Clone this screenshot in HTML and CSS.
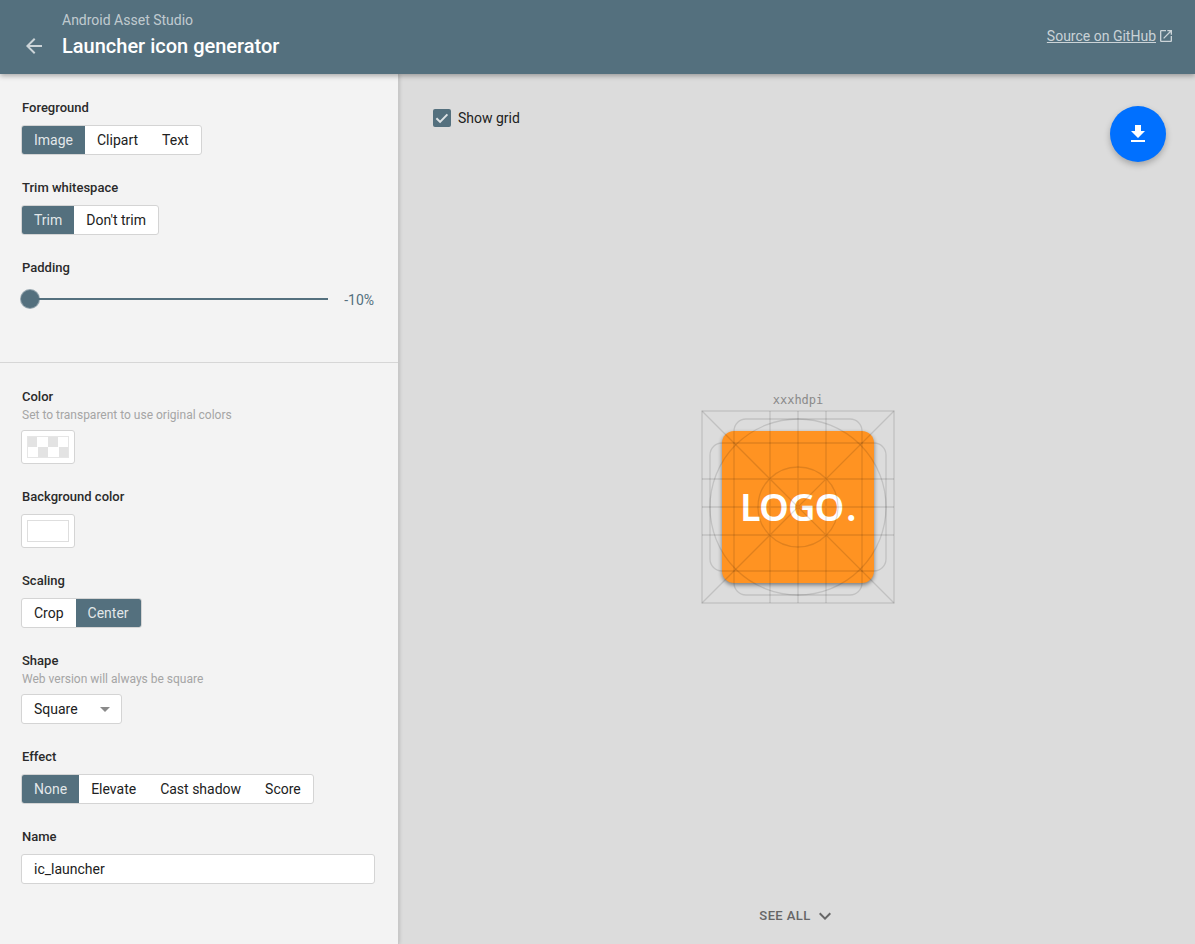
FILE: index.html
```html
<!DOCTYPE html>
<html lang="en">
<head>
<meta charset="utf-8">
<title>Launcher icon generator</title>
<link rel="stylesheet" href="styles.css">
</head>
<body>
<header class="appbar">
  <svg class="back" viewBox="0 0 24 24" width="24" height="24"><path d="M20 11H7.83l5.59-5.59L12 4l-8 8 8 8 1.41-1.41L7.83 13H20v-2z"/></svg>
  <div class="titles">
    <div class="kicker">Android Asset Studio</div>
    <div class="title">Launcher icon generator</div>
  </div>
  <a class="source"><span class="source-text">Source on GitHub</span><svg class="ext" viewBox="0 0 24 24" width="16" height="16"><path d="M19 19H5V5h7V3H5a2 2 0 0 0-2 2v14a2 2 0 0 0 2 2h14c1.1 0 2-.9 2-2v-7h-2v7zM14 3v2h3.59l-9.83 9.83 1.41 1.41L19 6.41V10h2V3h-7z"/></svg></a>
</header>
<div class="body">
  <aside class="sidebar">
    <section class="group first">
      <div class="field">
        <div class="label">Foreground</div>
        <div class="seg"><span class="on">Image</span><span>Clipart</span><span>Text</span></div>
      </div>
      <div class="field">
        <div class="label">Trim whitespace</div>
        <div class="seg"><span class="on">Trim</span><span>Don't trim</span></div>
      </div>
      <div class="field">
        <div class="label">Padding</div>
        <div class="slider">
          <div class="track"><div class="thumb"></div></div>
          <div class="value">-10%</div>
        </div>
      </div>
    </section>
    <section class="group">
      <div class="field">
        <div class="label">Color</div>
        <div class="hint">Set to transparent to use original colors</div>
        <div class="swatch"><div class="chip checker"></div></div>
      </div>
      <div class="field">
        <div class="label">Background color</div>
        <div class="swatch"><div class="chip"></div></div>
      </div>
      <div class="field">
        <div class="label">Scaling</div>
        <div class="seg"><span>Crop</span><span class="on">Center</span></div>
      </div>
      <div class="field">
        <div class="label">Shape</div>
        <div class="hint">Web version will always be square</div>
        <div class="select">Square<i class="caret"></i></div>
      </div>
      <div class="field">
        <div class="label">Effect</div>
        <div class="seg"><span class="on">None</span><span>Elevate</span><span>Cast shadow</span><span>Score</span></div>
      </div>
      <div class="field">
        <div class="label">Name</div>
        <div class="input">ic_launcher</div>
      </div>
    </section>
  </aside>
  <main class="main">
    <div class="toolbar">
      <span class="check"><svg viewBox="0 0 18 18" width="18" height="18"><path class="tick" d="M3.4 9.2l3.7 3.7 7.3-7.5"/></svg></span>
      <span class="check-label">Show grid</span>
    </div>
    <div class="stage">
      <div class="density">xxxhdpi</div>
      <svg class="preview" viewBox="-1 -1 194 194" width="194" height="194">
        <rect class="tile" x="20" y="20" width="152" height="152" rx="12"/>
        <text class="logo" x="38" y="110">LOGO<tspan dx="4">.</tspan></text>
        <g class="keylines">
          <rect x="0" y="0" width="192" height="192"/>
          <rect x="32" y="8" width="128" height="176" rx="12"/>
          <rect x="8" y="32" width="176" height="128" rx="12"/>
          <circle cx="96" cy="96" r="88"/>
          <circle cx="96" cy="96" r="40"/>
          <path d="M0 0L192 192M192 0L0 192M68 0V192M96 0V192M124 0V192M0 68H192M0 96H192M0 124H192"/>
        </g>
      </svg>
    </div>
    <div class="seeall"><span>SEE ALL</span><svg viewBox="0 0 24 24" width="24" height="24"><path d="M7.41 8.59L12 13.17l4.59-4.58L18 10l-6 6-6-6z"/></svg></div>
    <button class="fab"><svg viewBox="0 0 24 24" width="24" height="24"><path d="M19 9h-4V3H9v6H5l7 7 7-7zM5 18v2h14v-2H5z"/></svg></button>
  </main>
</div>
</body>
</html>
```

FILE: styles.css
```css
* { box-sizing: border-box; }
html, body { margin: 0; height: 100%; overflow: hidden; }
body {
  font-family: Roboto, "Liberation Sans", sans-serif;
  font-size: 14px;
  color: #212121;
  background: #dcdcdc;
  display: flex;
  flex-direction: column;
}
.appbar {
  height: 74px;
  flex: none;
  background: #54707e;
  color: #fff;
  display: flex;
  align-items: flex-start;
  padding: 0 21px 0 22px;
  box-shadow: 0 2px 5px rgba(0, 0, 0, .3);
  position: relative;
  z-index: 2;
}
.back { fill: rgba(255, 255, 255, .7); margin-top: 34px; margin-right: 16px; flex: none; }
.titles { flex: 1; padding-top: 12px; }
.kicker { font-size: 14px; line-height: 16px; color: rgba(255, 255, 255, .65); }
.title { font-size: 20px; line-height: 24px; font-weight: 500; margin-top: 6px; }
.source { display: flex; align-items: center; gap: 2px; margin-top: 28px; color: rgba(255, 255, 255, .7); }
.source-text { text-decoration: underline; line-height: 16px; }
.ext { fill: rgba(255, 255, 255, .7); }
.body { flex: 1; display: flex; min-height: 0; }
.sidebar {
  width: 399px;
  flex: none;
  background: #f3f3f3;
  border-right: 1px solid #c8c8c8;
  box-shadow: 0 0 4px rgba(0, 0, 0, .2);
  position: relative;
  z-index: 1;
}
.group { padding: 25px 23px 0 21px; }
.group.first { height: 289px; border-bottom: 1px solid #d6d6d6; }
.field { margin-bottom: 24px; }
.label { font-size: 13px; line-height: 18px; font-weight: 500; color: #2a2a2a; padding-left: 1px; margin-bottom: 8px; }
.hint { font-size: 12px; line-height: 14px; color: #a5a5a5; padding-left: 1px; margin: -6px 0 8px; }
.seg {
  display: inline-flex;
  height: 30px;
  background: #fff;
  border: 1px solid #d4d4d4;
  border-radius: 3px;
  overflow: hidden;
  vertical-align: top;
}
.seg span { padding: 0 12px; line-height: 28px; color: #212121; }
.seg .on { background: #54707e; color: rgba(255, 255, 255, .85); }
.slider { display: flex; align-items: center; height: 18px; margin-top: 13px; }
.track { position: relative; flex: none; width: 298px; height: 2px; margin-left: 9px; background: #54707e; }
.thumb {
  position: absolute;
  left: -9px;
  top: -8px;
  width: 18px;
  height: 18px;
  border-radius: 50%;
  background: #54707e;
  box-shadow: 0 0 0 1px rgba(84, 112, 126, .6);
}
.value { flex: 1; text-align: right; color: #54707e; font-size: 14px; padding: 2px 1px 0 0; }
.swatch {
  width: 54px;
  height: 34px;
  background: #fff;
  border: 1px solid #d4d4d4;
  border-radius: 3px;
  padding: 5px;
}
.chip { height: 22px; border: 1px solid #dedede; background: #fff; }
.chip.checker {
  border-color: #e6e6e6;
  background-image: conic-gradient(#fff 25%, #e3e3e3 0 50%, #fff 0 75%, #e3e3e3 0);
  background-size: 21px 22px;
  background-position: -1px -1px;
}
.select {
  width: 101px;
  height: 30px;
  background: #fff;
  border: 1px solid #d4d4d4;
  border-radius: 3px;
  line-height: 28px;
  padding-left: 12px;
  position: relative;
}
.caret {
  position: absolute;
  right: 11px;
  top: 12px;
  border: 5px solid transparent;
  border-top-color: #8a8a8a;
  border-bottom: 0;
}
.input {
  height: 30px;
  background: #fff;
  border: 1px solid #d4d4d4;
  border-radius: 3px;
  line-height: 28px;
  padding-left: 12px;
}
.main { flex: 1; min-width: 0; display: flex; flex-direction: column; position: relative; padding: 35px 32px 0 34px; }
.toolbar { display: flex; align-items: center; height: 18px; flex: none; gap: 7px; }
.check { width: 18px; height: 18px; border-radius: 2px; background: #54707e; display: block; }
.check svg { display: block; }
.tick { fill: none; stroke: rgba(255, 255, 255, .8); stroke-width: 2; }
.check-label { color: #212121; }
.stage { flex: 1; min-height: 0; display: flex; flex-direction: column; align-items: center; justify-content: center; }
.density { font-family: "DejaVu Sans Mono", "Liberation Mono", monospace; font-size: 12px; line-height: 14px; color: #8a8a8a; margin-bottom: 3px; }
.preview { display: block; }
.tile { fill: #ff9322; filter: drop-shadow(0 2px 2px rgba(0, 0, 0, .45)); }
.logo { font-family: "Noto Sans", "Open Sans", sans-serif; font-size: 38px; font-weight: 600; letter-spacing: -1px; fill: #fff; }
.keylines { fill: none; stroke: rgba(0, 0, 0, .12); stroke-width: 1.3; }
.seeall { height: 74px; flex: none; display: flex; justify-content: center; align-items: flex-start; padding-top: 38px; gap: 2px; color: #666; font-size: 13px; font-weight: 500; letter-spacing: .4px; }
.seeall span { line-height: 16px; }
.seeall svg { fill: #666; margin-top: -4px; }
.fab {
  position: absolute;
  top: 32px;
  right: 29px;
  width: 56px;
  height: 56px;
  border: 0;
  padding: 16px;
  border-radius: 50%;
  background: #0070ff;
  box-shadow: 0 3px 6px rgba(0, 0, 0, .25);
}
.fab svg { display: block; fill: #fff; }
```
